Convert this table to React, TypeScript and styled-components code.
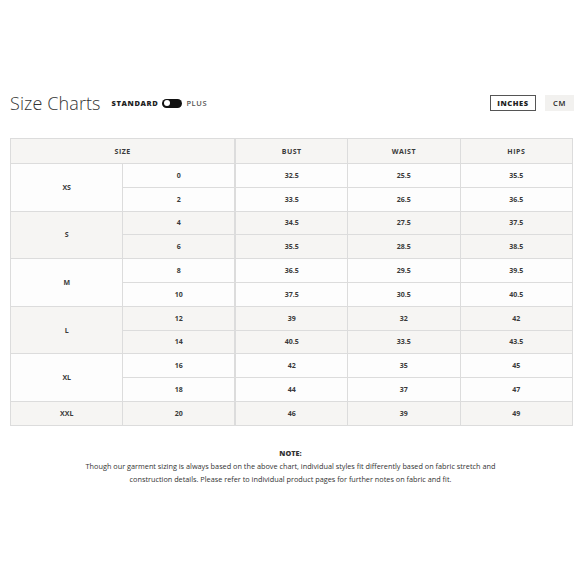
import React from 'react';
import styled, { createGlobalStyle } from 'styled-components';

const GlobalStyle = createGlobalStyle`
  body {
    margin: 0;
    background: #ffffff;
    font-family: 'Open Sans', 'DejaVu Sans', sans-serif;
    color: #222;
  }
`;

const Page = styled.div`
  padding: 91px 6px 0 10px;
`;

const TopBar = styled.div`
  display: flex;
  align-items: center;
  justify-content: space-between;
  height: 24px;
`;

const TitleGroup = styled.div`
  display: flex;
  align-items: center;
`;

const Title = styled.h1`
  margin: 0 11px 0 0;
  font-size: 18px;
  font-weight: 300;
  color: #333;
  letter-spacing: 0.1px;
`;

const ToggleLabel = styled.span<{ $active?: boolean }>`
  font-size: 7.5px;
  font-weight: ${(p) => (p.$active ? 800 : 600)};
  letter-spacing: 0.6px;
  color: ${(p) => (p.$active ? '#222' : '#555')};
`;

const Switch = styled.span`
  width: 20px;
  height: 9px;
  border-radius: 5px;
  background: #111;
  margin: 0 4px 0 4px;
  position: relative;
  &::after {
    content: '';
    position: absolute;
    left: 1.5px;
    top: 1.5px;
    width: 6px;
    height: 6px;
    border-radius: 50%;
    background: #fff;
  }
`;

const Units = styled.div`
  display: flex;
  gap: 9px;
`;

const UnitButton = styled.button<{ $active?: boolean }>`
  font-family: inherit;
  font-size: 7.5px;
  font-weight: ${(p) => (p.$active ? 800 : 600)};
  letter-spacing: 0.6px;
  color: #222;
  height: 16px;
  width: ${(p) => (p.$active ? 46 : 29)}px;
  padding: 0;
  background: ${(p) => (p.$active ? '#fff' : '#f2f1ef')};
  border: ${(p) => (p.$active ? '1px solid #555' : '1px solid #f2f1ef')};
  cursor: pointer;
`;

const Table = styled.table`
  margin-top: 23px;
  width: 563px;
  border-collapse: collapse;
  table-layout: fixed;
  font-size: 7px;
  font-weight: 700;
  color: #3a3a3a;
`;

const HeadCell = styled.th<{ $split?: boolean }>`
  height: 22px;
  background: #f6f5f3;
  border: 1px solid #dcdcdc;
  ${(p) => (p.$split ? 'border-right: 2px solid #dcdcdc;' : '')}
  font-weight: 700;
  letter-spacing: 0.5px;
`;

const Cell = styled.td<{ $shade?: boolean; $split?: boolean }>`
  height: 22.8px;
  padding: 0;
  text-align: center;
  background: ${(p) => (p.$shade ? '#f6f5f3' : '#fdfdfd')};
  border: 1px solid #dcdcdc;
  ${(p) => (p.$split ? 'border-right: 2px solid #dcdcdc;' : '')}
`;

const Note = styled.div`
  margin-top: 21px;
  text-align: center;
  font-size: 7.3px;
  line-height: 13px;
  color: #333;
  padding-right: 3px;
`;

const NoteTitle = styled.div`
  font-weight: 800;
`;

type Row = [string, string, string, string];
const groups: { label: string; rows: Row[] }[] = [
  { label: 'XS', rows: [['0', '32.5', '25.5', '35.5'], ['2', '33.5', '26.5', '36.5']] },
  { label: 'S', rows: [['4', '34.5', '27.5', '37.5'], ['6', '35.5', '28.5', '38.5']] },
  { label: 'M', rows: [['8', '36.5', '29.5', '39.5'], ['10', '37.5', '30.5', '40.5']] },
  { label: 'L', rows: [['12', '39', '32', '42'], ['14', '40.5', '33.5', '43.5']] },
  { label: 'XL', rows: [['16', '42', '35', '45'], ['18', '44', '37', '47']] },
  { label: 'XXL', rows: [['20', '46', '39', '49']] },
];

export default function App() {
  return (
    <>
      <GlobalStyle />
      <Page>
        <TopBar>
          <TitleGroup>
            <Title>Size Charts</Title>
            <ToggleLabel $active>STANDARD</ToggleLabel>
            <Switch />
            <ToggleLabel>PLUS</ToggleLabel>
          </TitleGroup>
          <Units>
            <UnitButton $active>INCHES</UnitButton>
            <UnitButton>CM</UnitButton>
          </Units>
        </TopBar>

        <Table>
          <thead>
            <tr>
              <HeadCell colSpan={2} $split>SIZE</HeadCell>
              <HeadCell>BUST</HeadCell>
              <HeadCell>WAIST</HeadCell>
              <HeadCell>HIPS</HeadCell>
            </tr>
          </thead>
          <tbody>
            {groups.map((g, gi) =>
              g.rows.map((r, ri) => (
                <tr key={g.label + ri}>
                  {ri === 0 && (
                    <Cell rowSpan={g.rows.length} $shade={gi % 2 === 1}>
                      {g.label}
                    </Cell>
                  )}
                  <Cell $shade={gi % 2 === 1} $split>{r[0]}</Cell>
                  <Cell $shade={gi % 2 === 1}>{r[1]}</Cell>
                  <Cell $shade={gi % 2 === 1}>{r[2]}</Cell>
                  <Cell $shade={gi % 2 === 1}>{r[3]}</Cell>
                </tr>
              ))
            )}
          </tbody>
        </Table>

        <Note>
          <NoteTitle>NOTE:</NoteTitle>
          <div>
            Though our garment sizing is always based on the above chart, individual styles fit differently based on fabric stretch and
          </div>
          <div>construction details. Please refer to individual product pages for further notes on fabric and fit.</div>
        </Note>
      </Page>
    </>
  );
}
